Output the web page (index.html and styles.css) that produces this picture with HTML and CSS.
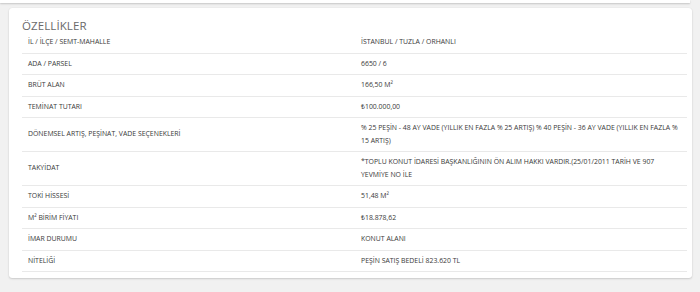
FILE: index.html
```html
<!DOCTYPE html>
<html lang="tr">
<head>
<meta charset="utf-8">
<link rel="stylesheet" href="styles.css">
</head>
<body>
<div class="page">
  <div class="prev-card"></div>
  <section class="card">
    <h2 class="title">ÖZELLİKLER</h2>
    <table class="props">
      <tr><td class="k">İL / İLÇE / SEMT-MAHALLE</td><td class="v">İSTANBUL / TUZLA / ORHANLI</td></tr>
      <tr><td class="k">ADA / PARSEL</td><td class="v">6650 / 6</td></tr>
      <tr><td class="k">BRÜT ALAN</td><td class="v">166,50 M²</td></tr>
      <tr><td class="k">TEMİNAT TUTARI</td><td class="v">₺100.000,00</td></tr>
      <tr><td class="k">DÖNEMSEL ARTIŞ, PEŞİNAT, VADE SEÇENEKLERİ</td><td class="v">% 25 PEŞİN - 48 AY VADE (YILLIK EN FAZLA % 25 ARTIŞ) % 40 PEŞİN - 36 AY VADE (YILLIK EN FAZLA % 15 ARTIŞ)</td></tr>
      <tr><td class="k">TAKYİDAT</td><td class="v">*TOPLU KONUT İDARESİ BAŞKANLIĞININ ÖN ALIM HAKKI VARDIR.(25/01/2011 TARİH VE 907 YEVMİYE NO İLE</td></tr>
      <tr><td class="k">TOKİ HİSSESİ</td><td class="v">51,48 M²</td></tr>
      <tr><td class="k">M² BİRİM FİYATI</td><td class="v">₺18.878,62</td></tr>
      <tr><td class="k">İMAR DURUMU</td><td class="v">KONUT ALANI</td></tr>
      <tr><td class="k">NİTELİĞİ</td><td class="v">PEŞİN SATIŞ BEDELİ 823.620 TL</td></tr>
    </table>
  </section>
</div>
</body>
</html>
```
FILE: styles.css
```css
* { box-sizing: border-box; }
html, body { margin: 0; padding: 0; }
body {
  background: #f1f1f1;
  font-family: "Open Sans", "Noto Sans", sans-serif;
  color: #383838;
  width: 700px;
  height: 292px;
  overflow: hidden;
}
.page {
  padding: 0 8px 0 0;
}
.prev-card {
  height: 3px;
  width: 690px;
  background: #fff;
  box-shadow: 0 1px 2px rgba(0,0,0,0.18);
}
.card {
  margin: 5px 0 0 9px;
  width: 683px;
  height: 270px;
  background: #fff;
  border-radius: 3px;
  box-shadow: 0 1px 2px rgba(0,0,0,0.15), 0 0 1px rgba(0,0,0,0.12);
  padding: 11px 5px 0 13px;
}
.title {
  margin: 0;
  font-size: 11.5px;
  font-weight: 400;
  color: #6a6a6a;
  line-height: 13px;
  letter-spacing: 0.1px;
}
.props {
  width: 665px;
  border-collapse: collapse;
  font-size: 6.9px;
  line-height: 12.5px;
  margin-top: 0;
}
.props td {
  padding: 4px 9px 4px 6px;
  border-bottom: 1px solid #e9e9e9;
  vertical-align: middle;
}
.props .k { width: 333px; }
```
